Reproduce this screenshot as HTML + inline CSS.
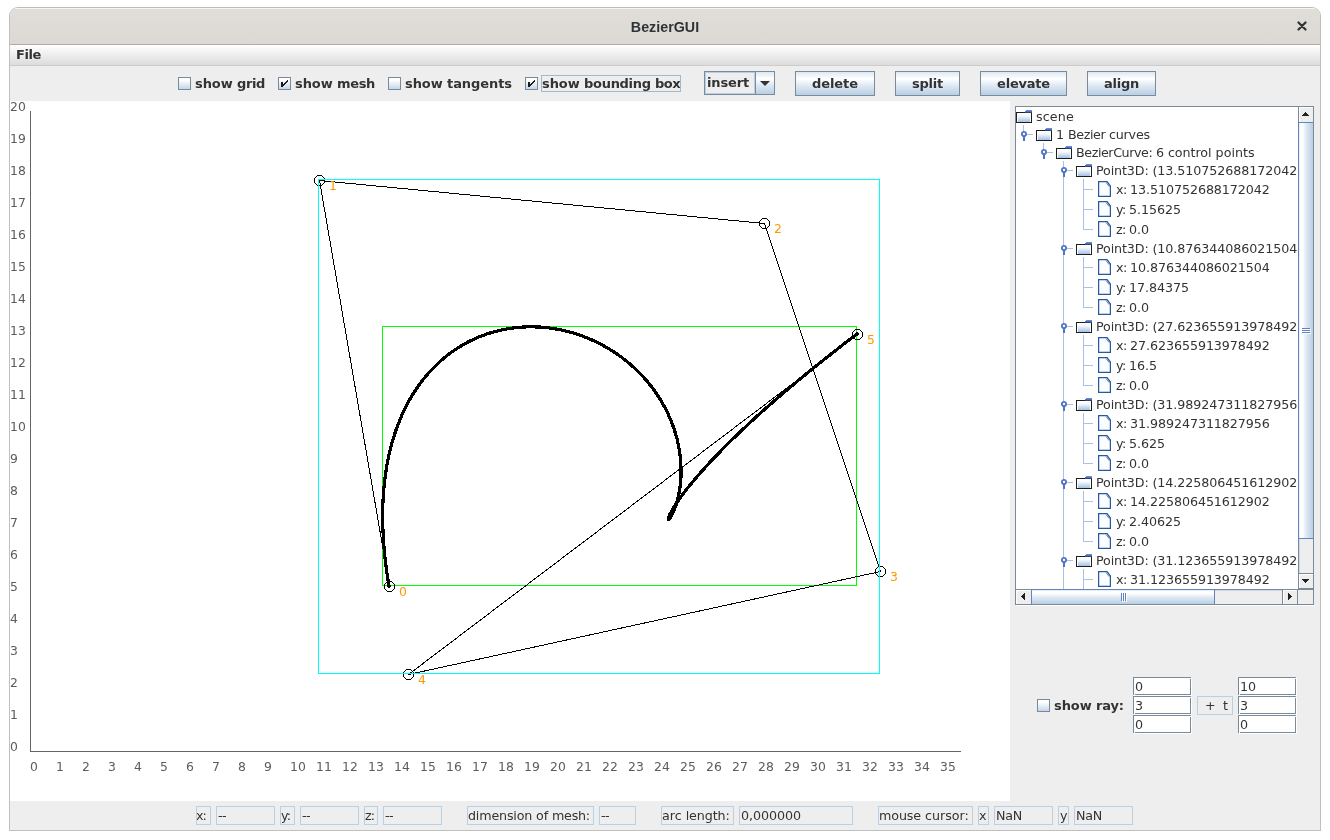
<!DOCTYPE html><html><head><meta charset="utf-8"><title>BezierGUI</title><style>
html,body{margin:0;padding:0;background:#fff;}
body{width:1330px;height:840px;position:relative;overflow:hidden;font-family:"DejaVu Sans","Liberation Sans",sans-serif;font-size:12px;color:#333;}
.abs{position:absolute;}
#win{position:absolute;left:9px;top:7px;width:1312px;height:824px;box-sizing:border-box;border:1px solid #c0c0c0;border-top-color:#bcbcbc;border-radius:9px 9px 0 0;background:#eeeeee;overflow:hidden;}
#title{position:absolute;left:0;top:0;width:1310px;height:37px;background:linear-gradient(#e1deda,#dcd8d4);border-top:1px solid #f6f6f5;box-sizing:border-box;border-bottom:1px solid #b3aba1;}
#title .t{position:absolute;left:0;width:1310px;top:9.2px;text-align:center;font:bold 14px "Liberation Sans",sans-serif;color:#2e3436;transform:scale(1.02,1.1);transform-origin:50% 50%;}
#menubar{position:absolute;left:0;top:37px;width:1310px;height:20px;background:linear-gradient(#ffffff,#dcdcdc);border-bottom:1px solid #cccccc;}
.b{font-weight:bold;font-size:13px;color:#333;white-space:nowrap;}
.cb{position:absolute;width:13px;height:13px;box-sizing:border-box;border:1px solid #7a8a99;background:linear-gradient(#ffffff 0%,#ffffff 20%,#c4d6e8 100%);}
.btn{position:absolute;box-sizing:border-box;border:1px solid #7a8a99;height:25px;background:linear-gradient(#dde8f3 0%,#ffffff 30%,#dde8f3 60%,#b8cfe5 100%);text-align:center;line-height:24px;}
.df{position:absolute;box-sizing:border-box;height:19px;background:#eeeeee;border:1px solid #b8cfe5;font-size:12.7px;line-height:17px;padding-left:2px;white-space:nowrap;overflow:hidden;color:#333;}
#canvas{position:absolute;left:10px;top:101px;width:1000px;height:700px;background:#fff;}
svg text{font-family:"DejaVu Sans",sans-serif;font-size:12.4px;}
.ft{font-size:12.7px;line-height:15px;color:#333;white-space:nowrap}
.tr{position:absolute;white-space:nowrap;font-size:12.7px;line-height:14px;color:#333;}
</style></head><body>
<div id="root" style="position:absolute;left:0;top:0;width:1330px;height:840px;will-change:transform">
<div id="win">
<div id="title"><div class="t">BezierGUI</div>
<svg class="abs" style="left:1287px;top:12px" width="10" height="10" viewBox="0 0 10 10"><path d="M1.5 1.5 L8.5 8.5 M8.5 1.5 L1.5 8.5" stroke="#2e3436" stroke-width="2.2" fill="none" stroke-linecap="round"/></svg>
</div>
<div id="menubar"><div class="abs b" style="left:6px;top:2px"><span style="letter-spacing:-0.40px">File</span></div></div>
</div>
<div class="cb" style="left:178px;top:77px"></div><div class="abs b" style="left:195px;top:76px"><span style="letter-spacing:-0.09px">show </span><span style="letter-spacing:-0.37px">grid</span></div>
<div class="cb" style="left:278px;top:77px"></div><svg class="abs" style="left:278px;top:77px" width="13" height="13" viewBox="0 0 13 13" shape-rendering="crispEdges" fill="#1a1a1a"><rect x="3" y="5" width="2" height="5"/><rect x="9" y="3" width="1" height="2"/><rect x="8" y="4" width="1" height="2"/><rect x="7" y="5" width="1" height="2"/><rect x="6" y="6" width="1" height="2"/><rect x="5" y="7" width="1" height="2"/></svg><div class="abs b" style="left:295px;top:76px"><span style="letter-spacing:-0.09px">show </span><span style="letter-spacing:-0.34px">mesh</span></div>
<div class="cb" style="left:388px;top:77px"></div><div class="abs b" style="left:405px;top:76px"><span style="letter-spacing:-0.09px">show </span><span style="letter-spacing:-0.07px">tangents</span></div>
<div class="cb" style="left:525px;top:77px"></div><svg class="abs" style="left:525px;top:77px" width="13" height="13" viewBox="0 0 13 13" shape-rendering="crispEdges" fill="#1a1a1a"><rect x="3" y="5" width="2" height="5"/><rect x="9" y="3" width="1" height="2"/><rect x="8" y="4" width="1" height="2"/><rect x="7" y="5" width="1" height="2"/><rect x="6" y="6" width="1" height="2"/><rect x="5" y="7" width="1" height="2"/></svg><div class="abs b" style="left:542px;top:76px"><span style="letter-spacing:-0.09px">show </span><span style="letter-spacing:-0.29px">bounding </span><span style="letter-spacing:-0.54px">box</span></div>
<div class="abs" style="left:541px;top:75px;width:140px;height:17px;box-sizing:border-box;border:1px solid #a3b8cc"></div>
<div class="abs" style="left:704px;top:71px;width:71px;height:24px;box-sizing:border-box;border:1px solid #7a8a99;background:#eeeeee"></div>
<div class="abs" style="left:705px;top:72px;width:50px;height:22px;box-sizing:border-box;border:1px solid #b8cfe5;"></div>
<div class="abs b" style="left:707px;top:75px"><span style="letter-spacing:-0.15px">insert</span></div>
<div class="abs" style="left:755px;top:71px;width:20px;height:24px;box-sizing:border-box;border:1px solid #7a8a99;background:linear-gradient(#dde8f3 0%,#ffffff 30%,#dde8f3 60%,#b8cfe5 100%)"></div>
<svg class="abs" style="left:760px;top:81px" width="10" height="6"><path d="M0 0 L10 0 L5 5 Z" fill="#333"/></svg>
<div class="btn b" style="left:795px;top:71px;width:80px"><span style="letter-spacing:-0.07px">delete</span></div>
<div class="btn b" style="left:895px;top:71px;width:65px"><span style="letter-spacing:-0.23px">split</span></div>
<div class="btn b" style="left:980px;top:71px;width:87px"><span style="letter-spacing:-0.20px">elevate</span></div>
<div class="btn b" style="left:1087px;top:71px;width:69px"><span style="letter-spacing:-0.25px">align</span></div>
<div id="canvas"></div>
<svg class="abs" style="left:0;top:0" width="1330" height="840" viewBox="0 0 1330 840" shape-rendering="crispEdges"><path d="M30.5 111 V751.5 H961" stroke="#646464" stroke-width="1" fill="none"/><text x="10" y="751" fill="#5c5c5c" letter-spacing="0.11">0</text><text x="10" y="719" fill="#5c5c5c" letter-spacing="0.11">1</text><text x="10" y="687" fill="#5c5c5c" letter-spacing="0.11">2</text><text x="10" y="655" fill="#5c5c5c" letter-spacing="0.11">3</text><text x="10" y="623" fill="#5c5c5c" letter-spacing="0.11">4</text><text x="10" y="591" fill="#5c5c5c" letter-spacing="0.11">5</text><text x="10" y="559" fill="#5c5c5c" letter-spacing="0.11">6</text><text x="10" y="527" fill="#5c5c5c" letter-spacing="0.11">7</text><text x="10" y="495" fill="#5c5c5c" letter-spacing="0.11">8</text><text x="10" y="463" fill="#5c5c5c" letter-spacing="0.11">9</text><text x="10" y="431" fill="#5c5c5c" letter-spacing="0.11">10</text><text x="10" y="399" fill="#5c5c5c" letter-spacing="0.11">11</text><text x="10" y="367" fill="#5c5c5c" letter-spacing="0.11">12</text><text x="10" y="335" fill="#5c5c5c" letter-spacing="0.11">13</text><text x="10" y="303" fill="#5c5c5c" letter-spacing="0.11">14</text><text x="10" y="271" fill="#5c5c5c" letter-spacing="0.11">15</text><text x="10" y="239" fill="#5c5c5c" letter-spacing="0.11">16</text><text x="10" y="207" fill="#5c5c5c" letter-spacing="0.11">17</text><text x="10" y="175" fill="#5c5c5c" letter-spacing="0.11">18</text><text x="10" y="143" fill="#5c5c5c" letter-spacing="0.11">19</text><text x="10" y="111" fill="#5c5c5c" letter-spacing="0.11">20</text><text x="30" y="771" fill="#5c5c5c" letter-spacing="0.11">0</text><text x="56" y="771" fill="#5c5c5c" letter-spacing="0.11">1</text><text x="82" y="771" fill="#5c5c5c" letter-spacing="0.11">2</text><text x="108" y="771" fill="#5c5c5c" letter-spacing="0.11">3</text><text x="134" y="771" fill="#5c5c5c" letter-spacing="0.11">4</text><text x="160" y="771" fill="#5c5c5c" letter-spacing="0.11">5</text><text x="186" y="771" fill="#5c5c5c" letter-spacing="0.11">6</text><text x="212" y="771" fill="#5c5c5c" letter-spacing="0.11">7</text><text x="238" y="771" fill="#5c5c5c" letter-spacing="0.11">8</text><text x="264" y="771" fill="#5c5c5c" letter-spacing="0.11">9</text><text x="290" y="771" fill="#5c5c5c" letter-spacing="0.11">10</text><text x="316" y="771" fill="#5c5c5c" letter-spacing="0.11">11</text><text x="342" y="771" fill="#5c5c5c" letter-spacing="0.11">12</text><text x="368" y="771" fill="#5c5c5c" letter-spacing="0.11">13</text><text x="394" y="771" fill="#5c5c5c" letter-spacing="0.11">14</text><text x="420" y="771" fill="#5c5c5c" letter-spacing="0.11">15</text><text x="446" y="771" fill="#5c5c5c" letter-spacing="0.11">16</text><text x="472" y="771" fill="#5c5c5c" letter-spacing="0.11">17</text><text x="498" y="771" fill="#5c5c5c" letter-spacing="0.11">18</text><text x="524" y="771" fill="#5c5c5c" letter-spacing="0.11">19</text><text x="550" y="771" fill="#5c5c5c" letter-spacing="0.11">20</text><text x="576" y="771" fill="#5c5c5c" letter-spacing="0.11">21</text><text x="602" y="771" fill="#5c5c5c" letter-spacing="0.11">22</text><text x="628" y="771" fill="#5c5c5c" letter-spacing="0.11">23</text><text x="654" y="771" fill="#5c5c5c" letter-spacing="0.11">24</text><text x="680" y="771" fill="#5c5c5c" letter-spacing="0.11">25</text><text x="706" y="771" fill="#5c5c5c" letter-spacing="0.11">26</text><text x="732" y="771" fill="#5c5c5c" letter-spacing="0.11">27</text><text x="758" y="771" fill="#5c5c5c" letter-spacing="0.11">28</text><text x="784" y="771" fill="#5c5c5c" letter-spacing="0.11">29</text><text x="810" y="771" fill="#5c5c5c" letter-spacing="0.11">30</text><text x="836" y="771" fill="#5c5c5c" letter-spacing="0.11">31</text><text x="862" y="771" fill="#5c5c5c" letter-spacing="0.11">32</text><text x="888" y="771" fill="#5c5c5c" letter-spacing="0.11">33</text><text x="914" y="771" fill="#5c5c5c" letter-spacing="0.11">34</text><text x="940" y="771" fill="#5c5c5c" letter-spacing="0.11">35</text><rect x="382.5" y="326.5" width="474" height="259" stroke="#00ff00" fill="none"/><polyline points="389.5,586.5 319.5,180.5 764.5,223.5 880.5,571.5 408.5,674.5 857.5,334.5" stroke="#000" stroke-width="1" fill="none"/><polyline points="389.0,586.0 387.9,579.3 386.9,572.7 386.0,566.1 385.2,559.7 384.6,553.4 384.0,547.2 383.5,541.1 383.2,535.0 382.9,529.1 382.7,523.3 382.7,517.5 382.7,511.9 382.8,506.3 383.0,500.9 383.3,495.5 383.7,490.3 384.2,485.1 384.8,480.0 385.4,475.0 386.1,470.2 386.9,465.4 387.8,460.7 388.7,456.0 389.8,451.5 390.9,447.1 392.0,442.7 393.3,438.5 394.6,434.3 395.9,430.3 397.4,426.3 398.9,422.4 400.4,418.6 402.0,414.8 403.7,411.2 405.4,407.6 407.2,404.2 409.0,400.8 410.9,397.5 412.9,394.3 414.9,391.1 416.9,388.1 419.0,385.1 421.1,382.2 423.3,379.4 425.5,376.7 427.7,374.0 430.0,371.5 432.3,369.0 434.7,366.6 437.1,364.3 439.5,362.0 441.9,359.8 444.4,357.7 446.9,355.7 449.5,353.7 452.0,351.9 454.6,350.1 457.2,348.3 459.9,346.7 462.5,345.1 465.2,343.6 467.9,342.1 470.6,340.7 473.4,339.4 476.1,338.2 478.9,337.0 481.6,335.9 484.4,334.9 487.2,333.9 490.0,333.0 492.8,332.2 495.6,331.4 498.4,330.7 501.3,330.0 504.1,329.4 506.9,328.9 509.7,328.4 512.6,328.0 515.4,327.7 518.2,327.4 521.1,327.2 523.9,327.0 526.7,326.9 529.5,326.8 532.3,326.8 535.1,326.9 537.9,327.0 540.7,327.1 543.4,327.4 546.2,327.6 548.9,327.9 551.7,328.3 554.4,328.7 557.1,329.2 559.8,329.7 562.4,330.2 565.1,330.9 567.7,331.5 570.3,332.2 572.9,332.9 575.5,333.7 578.1,334.6 580.6,335.4 583.1,336.3 585.6,337.3 588.1,338.3 590.5,339.3 592.9,340.4 595.3,341.5 597.7,342.7 600.0,343.9 602.4,345.1 604.6,346.3 606.9,347.6 609.1,348.9 611.3,350.3 613.5,351.7 615.6,353.1 617.8,354.6 619.8,356.0 621.9,357.5 623.9,359.1 625.9,360.6 627.8,362.2 629.8,363.8 631.6,365.5 633.5,367.2 635.3,368.8 637.1,370.6 638.8,372.3 640.5,374.0 642.2,375.8 643.9,377.6 645.5,379.4 647.1,381.2 648.6,383.1 650.1,385.0 651.6,386.8 653.0,388.7 654.4,390.6 655.7,392.6 657.1,394.5 658.3,396.4 659.6,398.4 660.8,400.4 662.0,402.3 663.1,404.3 664.2,406.3 665.3,408.3 666.3,410.3 667.3,412.3 668.2,414.3 669.1,416.4 670.0,418.4 670.9,420.4 671.7,422.4 672.4,424.4 673.2,426.5 673.9,428.5 674.5,430.5 675.2,432.5 675.8,434.5 676.3,436.5 676.9,438.5 677.4,440.5 677.8,442.5 678.3,444.5 678.7,446.5 679.0,448.4 679.3,450.4 679.6,452.3 679.9,454.3 680.2,456.2 680.4,458.1 680.5,460.0 680.7,461.9 680.8,463.7 680.9,465.6 681.0,467.4 681.0,469.2 681.0,471.0 681.0,472.8 681.0,474.5 680.9,476.3 680.9,478.0 680.8,479.6 680.6,481.3 680.5,482.9 680.3,484.6 680.1,486.1 679.9,487.7 679.7,489.2 679.5,490.7 679.2,492.2 678.9,493.6 678.6,495.1 678.3,496.4 678.0,497.8 677.7,499.1 677.4,500.4 677.0,501.6 676.7,502.8 676.3,504.0 676.0,505.2 675.6,506.3 675.2,507.3 674.8,508.3 674.5,509.3 674.1,510.3 673.7,511.2 673.3,512.0 672.9,512.8 672.6,513.6 672.2,514.3 671.9,515.0 671.5,515.7 671.2,516.3 670.8,516.8 670.5,517.3 670.2,517.7 669.9,518.1 669.7,518.5 669.4,518.8 669.2,519.0 669.0,519.2 668.8,519.3 668.6,519.4 668.5,519.4 668.4,519.4 668.3,519.3 668.2,519.2 668.2,519.0 668.2,518.7 668.3,518.4 668.4,518.0 668.5,517.6 668.7,517.1 668.9,516.5 669.1,515.9 669.4,515.2 669.8,514.5 670.2,513.6 670.7,512.8 671.2,511.8 671.7,510.8 672.4,509.7 673.0,508.6 673.8,507.4 674.6,506.1 675.5,504.7 676.4,503.3 677.4,501.8 678.5,500.2 679.7,498.6 680.9,496.8 682.3,495.0 683.7,493.2 685.1,491.2 686.7,489.2 688.4,487.1 690.1,485.0 692.0,482.7 693.9,480.4 696.0,478.0 698.1,475.5 700.3,472.9 702.7,470.3 705.1,467.6 707.7,464.7 710.4,461.8 713.2,458.9 716.1,455.8 719.1,452.7 722.3,449.4 725.6,446.1 729.0,442.7 732.5,439.2 736.2,435.7 740.0,432.0 744.0,428.3 748.1,424.4 752.3,420.5 756.7,416.5 761.2,412.4 765.9,408.2 770.8,403.9 775.8,399.5 781.0,395.0 786.3,390.5 791.9,385.8 797.5,381.1 803.4,376.2 809.4,371.3 815.7,366.2 822.1,361.1 828.7,355.9 835.5,350.6 842.4,345.1 849.6,339.6 857.0,334.0" stroke="#000" stroke-width="3.2" fill="none" stroke-linejoin="round" stroke-linecap="square"/><path d="M387.5 581.5h4l3 3v4l-3 3h-4l-3 -3v-4z" stroke="#000" fill="none"/><text x="399" y="596" fill="#ff9800">0</text><path d="M317.5 175.5h4l3 3v4l-3 3h-4l-3 -3v-4z" stroke="#000" fill="none"/><text x="329" y="190" fill="#ff9800">1</text><path d="M762.5 218.5h4l3 3v4l-3 3h-4l-3 -3v-4z" stroke="#000" fill="none"/><text x="774" y="233" fill="#ff9800">2</text><path d="M878.5 566.5h4l3 3v4l-3 3h-4l-3 -3v-4z" stroke="#000" fill="none"/><text x="890" y="581" fill="#ff9800">3</text><path d="M406.5 669.5h4l3 3v4l-3 3h-4l-3 -3v-4z" stroke="#000" fill="none"/><text x="418" y="684" fill="#ff9800">4</text><path d="M855.5 329.5h4l3 3v4l-3 3h-4l-3 -3v-4z" stroke="#000" fill="none"/><text x="867" y="344" fill="#ff9800">5</text><rect x="318.5" y="179.5" width="561" height="494" stroke="#00ffff" fill="none"/></svg>
<div class="abs" style="left:1015px;top:106px;width:299px;height:499px;box-sizing:border-box;border:1px solid #7a8a99;background:#fff"></div>
<svg width="0" height="0" style="position:absolute"><defs><linearGradient id="fg" x1="0" y1="0" x2="0" y2="1"><stop offset="0" stop-color="#ffffff"/><stop offset="0.25" stop-color="#f4f8fc"/><stop offset="1" stop-color="#a3c0e6"/></linearGradient></defs></svg>
<div class="abs" style="left:1016px;top:107px;width:282px;height:482px;overflow:hidden;background:#fff"><div class="abs" style="left:7px;top:18px;width:1px;height:10px;background:#a9c1e4"></div><div class="abs" style="left:27px;top:36px;width:1px;height:10px;background:#a9c1e4"></div><div class="abs" style="left:47px;top:54px;width:1px;height:428px;background:#a9c1e4"></div><div class="abs" style="left:67px;top:72px;width:1px;height:51px;background:#a9c1e4"></div><div class="abs" style="left:67px;top:150px;width:1px;height:51px;background:#a9c1e4"></div><div class="abs" style="left:67px;top:228px;width:1px;height:51px;background:#a9c1e4"></div><div class="abs" style="left:67px;top:306px;width:1px;height:51px;background:#a9c1e4"></div><div class="abs" style="left:67px;top:384px;width:1px;height:51px;background:#a9c1e4"></div><div class="abs" style="left:67px;top:462px;width:1px;height:51px;background:#a9c1e4"></div><svg class="abs" style="left:0px;top:3px" width="16" height="13" viewBox="0 0 16 13" shape-rendering="crispEdges"><rect x="10" y="0" width="6" height="1" fill="#6a8ad0"/><rect x="9" y="1" width="7" height="1" fill="#4f72c0"/><rect x="0" y="2" width="16" height="11" fill="#1e1e1e"/><rect x="1" y="3" width="14" height="9" fill="#ffffff"/><rect x="2" y="4" width="12" height="8" fill="url(#fg)"/><rect x="9" y="2" width="7" height="1" fill="#33466e"/></svg><div class="tr" style="left:20px;top:3px"><span style="letter-spacing:0.14px">scene</span></div><svg class="abs" style="left:20px;top:21px" width="16" height="13" viewBox="0 0 16 13" shape-rendering="crispEdges"><rect x="10" y="0" width="6" height="1" fill="#6a8ad0"/><rect x="9" y="1" width="7" height="1" fill="#4f72c0"/><rect x="0" y="2" width="16" height="11" fill="#1e1e1e"/><rect x="1" y="3" width="14" height="9" fill="#ffffff"/><rect x="2" y="4" width="12" height="8" fill="url(#fg)"/><rect x="9" y="2" width="7" height="1" fill="#33466e"/></svg><div class="tr" style="left:40px;top:21px"><span style="letter-spacing:-0.06px">1 </span><span style="letter-spacing:-0.40px">Bezier </span><span style="letter-spacing:-0.20px">curves</span></div><div class="abs" style="left:11px;top:27px;width:6px;height:1px;background:#a9c1e4"></div><svg class="abs" style="left:4px;top:23px" width="8" height="11" viewBox="0 0 8 11"><circle cx="4" cy="4" r="2.1" fill="#fff" stroke="#5476c0" stroke-width="1.9"/><rect x="3" y="6.5" width="2" height="4.5" fill="#5476c0"/></svg><svg class="abs" style="left:40px;top:39px" width="16" height="13" viewBox="0 0 16 13" shape-rendering="crispEdges"><rect x="10" y="0" width="6" height="1" fill="#6a8ad0"/><rect x="9" y="1" width="7" height="1" fill="#4f72c0"/><rect x="0" y="2" width="16" height="11" fill="#1e1e1e"/><rect x="1" y="3" width="14" height="9" fill="#ffffff"/><rect x="2" y="4" width="12" height="8" fill="url(#fg)"/><rect x="9" y="2" width="7" height="1" fill="#33466e"/></svg><div class="tr" style="left:60px;top:39px"><span style="letter-spacing:-0.43px">BezierCurve: </span><span style="letter-spacing:-0.06px">6 </span><span style="letter-spacing:-0.04px">control </span><span style="letter-spacing:-0.00px">points</span></div><div class="abs" style="left:31px;top:45px;width:6px;height:1px;background:#a9c1e4"></div><svg class="abs" style="left:24px;top:41px" width="8" height="11" viewBox="0 0 8 11"><circle cx="4" cy="4" r="2.1" fill="#fff" stroke="#5476c0" stroke-width="1.9"/><rect x="3" y="6.5" width="2" height="4.5" fill="#5476c0"/></svg><svg class="abs" style="left:60px;top:57px" width="16" height="13" viewBox="0 0 16 13" shape-rendering="crispEdges"><rect x="10" y="0" width="6" height="1" fill="#6a8ad0"/><rect x="9" y="1" width="7" height="1" fill="#4f72c0"/><rect x="0" y="2" width="16" height="11" fill="#1e1e1e"/><rect x="1" y="3" width="14" height="9" fill="#ffffff"/><rect x="2" y="4" width="12" height="8" fill="url(#fg)"/><rect x="9" y="2" width="7" height="1" fill="#33466e"/></svg><div class="tr" style="left:80px;top:57px"><span style="letter-spacing:-0.13px">Point3D: </span><span style="letter-spacing:-0.07px">(13.510752688172042, </span><span style="letter-spacing:-0.07px">5.15625, </span><span style="letter-spacing:-0.04px">0.0)</span></div><div class="abs" style="left:51px;top:63px;width:6px;height:1px;background:#a9c1e4"></div><svg class="abs" style="left:44px;top:59px" width="8" height="11" viewBox="0 0 8 11"><circle cx="4" cy="4" r="2.1" fill="#fff" stroke="#5476c0" stroke-width="1.9"/><rect x="3" y="6.5" width="2" height="4.5" fill="#5476c0"/></svg><svg class="abs" style="left:82px;top:74px" width="13" height="16" viewBox="0 0 13 16"><path d="M0.6 0.5 H9 L12.4 5 V15.4 H0.6 Z" fill="#fbfdff" stroke="#2a589c" stroke-width="1.25"/><path d="M8 1.6 L11.4 5.8" fill="none" stroke="#2a589c" stroke-width="0.9" opacity="0.75"/></svg><div class="tr" style="left:100px;top:76px"><span style="letter-spacing:-0.61px">x: </span><span style="letter-spacing:-0.08px">13.510752688172042</span></div><div class="abs" style="left:67px;top:82px;width:10px;height:1px;background:#a9c1e4"></div><svg class="abs" style="left:82px;top:94px" width="13" height="16" viewBox="0 0 13 16"><path d="M0.6 0.5 H9 L12.4 5 V15.4 H0.6 Z" fill="#fbfdff" stroke="#2a589c" stroke-width="1.25"/><path d="M8 1.6 L11.4 5.8" fill="none" stroke="#2a589c" stroke-width="0.9" opacity="0.75"/></svg><div class="tr" style="left:100px;top:96px"><span style="letter-spacing:-0.61px">y: </span><span style="letter-spacing:-0.07px">5.15625</span></div><div class="abs" style="left:67px;top:102px;width:10px;height:1px;background:#a9c1e4"></div><svg class="abs" style="left:82px;top:114px" width="13" height="16" viewBox="0 0 13 16"><path d="M0.6 0.5 H9 L12.4 5 V15.4 H0.6 Z" fill="#fbfdff" stroke="#2a589c" stroke-width="1.25"/><path d="M8 1.6 L11.4 5.8" fill="none" stroke="#2a589c" stroke-width="0.9" opacity="0.75"/></svg><div class="tr" style="left:100px;top:116px"><span style="letter-spacing:-0.66px">z: </span><span style="letter-spacing:-0.07px">0.0</span></div><div class="abs" style="left:67px;top:122px;width:10px;height:1px;background:#a9c1e4"></div><svg class="abs" style="left:60px;top:135px" width="16" height="13" viewBox="0 0 16 13" shape-rendering="crispEdges"><rect x="10" y="0" width="6" height="1" fill="#6a8ad0"/><rect x="9" y="1" width="7" height="1" fill="#4f72c0"/><rect x="0" y="2" width="16" height="11" fill="#1e1e1e"/><rect x="1" y="3" width="14" height="9" fill="#ffffff"/><rect x="2" y="4" width="12" height="8" fill="url(#fg)"/><rect x="9" y="2" width="7" height="1" fill="#33466e"/></svg><div class="tr" style="left:80px;top:135px"><span style="letter-spacing:-0.13px">Point3D: </span><span style="letter-spacing:-0.07px">(10.876344086021504, </span><span style="letter-spacing:-0.07px">17.84375, </span><span style="letter-spacing:-0.04px">0.0)</span></div><div class="abs" style="left:51px;top:141px;width:6px;height:1px;background:#a9c1e4"></div><svg class="abs" style="left:44px;top:137px" width="8" height="11" viewBox="0 0 8 11"><circle cx="4" cy="4" r="2.1" fill="#fff" stroke="#5476c0" stroke-width="1.9"/><rect x="3" y="6.5" width="2" height="4.5" fill="#5476c0"/></svg><svg class="abs" style="left:82px;top:152px" width="13" height="16" viewBox="0 0 13 16"><path d="M0.6 0.5 H9 L12.4 5 V15.4 H0.6 Z" fill="#fbfdff" stroke="#2a589c" stroke-width="1.25"/><path d="M8 1.6 L11.4 5.8" fill="none" stroke="#2a589c" stroke-width="0.9" opacity="0.75"/></svg><div class="tr" style="left:100px;top:154px"><span style="letter-spacing:-0.61px">x: </span><span style="letter-spacing:-0.08px">10.876344086021504</span></div><div class="abs" style="left:67px;top:160px;width:10px;height:1px;background:#a9c1e4"></div><svg class="abs" style="left:82px;top:172px" width="13" height="16" viewBox="0 0 13 16"><path d="M0.6 0.5 H9 L12.4 5 V15.4 H0.6 Z" fill="#fbfdff" stroke="#2a589c" stroke-width="1.25"/><path d="M8 1.6 L11.4 5.8" fill="none" stroke="#2a589c" stroke-width="0.9" opacity="0.75"/></svg><div class="tr" style="left:100px;top:174px"><span style="letter-spacing:-0.61px">y: </span><span style="letter-spacing:-0.07px">17.84375</span></div><div class="abs" style="left:67px;top:180px;width:10px;height:1px;background:#a9c1e4"></div><svg class="abs" style="left:82px;top:192px" width="13" height="16" viewBox="0 0 13 16"><path d="M0.6 0.5 H9 L12.4 5 V15.4 H0.6 Z" fill="#fbfdff" stroke="#2a589c" stroke-width="1.25"/><path d="M8 1.6 L11.4 5.8" fill="none" stroke="#2a589c" stroke-width="0.9" opacity="0.75"/></svg><div class="tr" style="left:100px;top:194px"><span style="letter-spacing:-0.66px">z: </span><span style="letter-spacing:-0.07px">0.0</span></div><div class="abs" style="left:67px;top:200px;width:10px;height:1px;background:#a9c1e4"></div><svg class="abs" style="left:60px;top:213px" width="16" height="13" viewBox="0 0 16 13" shape-rendering="crispEdges"><rect x="10" y="0" width="6" height="1" fill="#6a8ad0"/><rect x="9" y="1" width="7" height="1" fill="#4f72c0"/><rect x="0" y="2" width="16" height="11" fill="#1e1e1e"/><rect x="1" y="3" width="14" height="9" fill="#ffffff"/><rect x="2" y="4" width="12" height="8" fill="url(#fg)"/><rect x="9" y="2" width="7" height="1" fill="#33466e"/></svg><div class="tr" style="left:80px;top:213px"><span style="letter-spacing:-0.13px">Point3D: </span><span style="letter-spacing:-0.07px">(27.623655913978492, </span><span style="letter-spacing:-0.06px">16.5, </span><span style="letter-spacing:-0.04px">0.0)</span></div><div class="abs" style="left:51px;top:219px;width:6px;height:1px;background:#a9c1e4"></div><svg class="abs" style="left:44px;top:215px" width="8" height="11" viewBox="0 0 8 11"><circle cx="4" cy="4" r="2.1" fill="#fff" stroke="#5476c0" stroke-width="1.9"/><rect x="3" y="6.5" width="2" height="4.5" fill="#5476c0"/></svg><svg class="abs" style="left:82px;top:230px" width="13" height="16" viewBox="0 0 13 16"><path d="M0.6 0.5 H9 L12.4 5 V15.4 H0.6 Z" fill="#fbfdff" stroke="#2a589c" stroke-width="1.25"/><path d="M8 1.6 L11.4 5.8" fill="none" stroke="#2a589c" stroke-width="0.9" opacity="0.75"/></svg><div class="tr" style="left:100px;top:232px"><span style="letter-spacing:-0.61px">x: </span><span style="letter-spacing:-0.08px">27.623655913978492</span></div><div class="abs" style="left:67px;top:238px;width:10px;height:1px;background:#a9c1e4"></div><svg class="abs" style="left:82px;top:250px" width="13" height="16" viewBox="0 0 13 16"><path d="M0.6 0.5 H9 L12.4 5 V15.4 H0.6 Z" fill="#fbfdff" stroke="#2a589c" stroke-width="1.25"/><path d="M8 1.6 L11.4 5.8" fill="none" stroke="#2a589c" stroke-width="0.9" opacity="0.75"/></svg><div class="tr" style="left:100px;top:252px"><span style="letter-spacing:-0.61px">y: </span><span style="letter-spacing:-0.07px">16.5</span></div><div class="abs" style="left:67px;top:258px;width:10px;height:1px;background:#a9c1e4"></div><svg class="abs" style="left:82px;top:270px" width="13" height="16" viewBox="0 0 13 16"><path d="M0.6 0.5 H9 L12.4 5 V15.4 H0.6 Z" fill="#fbfdff" stroke="#2a589c" stroke-width="1.25"/><path d="M8 1.6 L11.4 5.8" fill="none" stroke="#2a589c" stroke-width="0.9" opacity="0.75"/></svg><div class="tr" style="left:100px;top:272px"><span style="letter-spacing:-0.66px">z: </span><span style="letter-spacing:-0.07px">0.0</span></div><div class="abs" style="left:67px;top:278px;width:10px;height:1px;background:#a9c1e4"></div><svg class="abs" style="left:60px;top:291px" width="16" height="13" viewBox="0 0 16 13" shape-rendering="crispEdges"><rect x="10" y="0" width="6" height="1" fill="#6a8ad0"/><rect x="9" y="1" width="7" height="1" fill="#4f72c0"/><rect x="0" y="2" width="16" height="11" fill="#1e1e1e"/><rect x="1" y="3" width="14" height="9" fill="#ffffff"/><rect x="2" y="4" width="12" height="8" fill="url(#fg)"/><rect x="9" y="2" width="7" height="1" fill="#33466e"/></svg><div class="tr" style="left:80px;top:291px"><span style="letter-spacing:-0.13px">Point3D: </span><span style="letter-spacing:-0.07px">(31.989247311827956, </span><span style="letter-spacing:-0.06px">5.625, </span><span style="letter-spacing:-0.04px">0.0)</span></div><div class="abs" style="left:51px;top:297px;width:6px;height:1px;background:#a9c1e4"></div><svg class="abs" style="left:44px;top:293px" width="8" height="11" viewBox="0 0 8 11"><circle cx="4" cy="4" r="2.1" fill="#fff" stroke="#5476c0" stroke-width="1.9"/><rect x="3" y="6.5" width="2" height="4.5" fill="#5476c0"/></svg><svg class="abs" style="left:82px;top:308px" width="13" height="16" viewBox="0 0 13 16"><path d="M0.6 0.5 H9 L12.4 5 V15.4 H0.6 Z" fill="#fbfdff" stroke="#2a589c" stroke-width="1.25"/><path d="M8 1.6 L11.4 5.8" fill="none" stroke="#2a589c" stroke-width="0.9" opacity="0.75"/></svg><div class="tr" style="left:100px;top:310px"><span style="letter-spacing:-0.61px">x: </span><span style="letter-spacing:-0.08px">31.989247311827956</span></div><div class="abs" style="left:67px;top:316px;width:10px;height:1px;background:#a9c1e4"></div><svg class="abs" style="left:82px;top:328px" width="13" height="16" viewBox="0 0 13 16"><path d="M0.6 0.5 H9 L12.4 5 V15.4 H0.6 Z" fill="#fbfdff" stroke="#2a589c" stroke-width="1.25"/><path d="M8 1.6 L11.4 5.8" fill="none" stroke="#2a589c" stroke-width="0.9" opacity="0.75"/></svg><div class="tr" style="left:100px;top:330px"><span style="letter-spacing:-0.61px">y: </span><span style="letter-spacing:-0.07px">5.625</span></div><div class="abs" style="left:67px;top:336px;width:10px;height:1px;background:#a9c1e4"></div><svg class="abs" style="left:82px;top:348px" width="13" height="16" viewBox="0 0 13 16"><path d="M0.6 0.5 H9 L12.4 5 V15.4 H0.6 Z" fill="#fbfdff" stroke="#2a589c" stroke-width="1.25"/><path d="M8 1.6 L11.4 5.8" fill="none" stroke="#2a589c" stroke-width="0.9" opacity="0.75"/></svg><div class="tr" style="left:100px;top:350px"><span style="letter-spacing:-0.66px">z: </span><span style="letter-spacing:-0.07px">0.0</span></div><div class="abs" style="left:67px;top:356px;width:10px;height:1px;background:#a9c1e4"></div><svg class="abs" style="left:60px;top:369px" width="16" height="13" viewBox="0 0 16 13" shape-rendering="crispEdges"><rect x="10" y="0" width="6" height="1" fill="#6a8ad0"/><rect x="9" y="1" width="7" height="1" fill="#4f72c0"/><rect x="0" y="2" width="16" height="11" fill="#1e1e1e"/><rect x="1" y="3" width="14" height="9" fill="#ffffff"/><rect x="2" y="4" width="12" height="8" fill="url(#fg)"/><rect x="9" y="2" width="7" height="1" fill="#33466e"/></svg><div class="tr" style="left:80px;top:369px"><span style="letter-spacing:-0.13px">Point3D: </span><span style="letter-spacing:-0.07px">(14.225806451612902, </span><span style="letter-spacing:-0.07px">2.40625, </span><span style="letter-spacing:-0.04px">0.0)</span></div><div class="abs" style="left:51px;top:375px;width:6px;height:1px;background:#a9c1e4"></div><svg class="abs" style="left:44px;top:371px" width="8" height="11" viewBox="0 0 8 11"><circle cx="4" cy="4" r="2.1" fill="#fff" stroke="#5476c0" stroke-width="1.9"/><rect x="3" y="6.5" width="2" height="4.5" fill="#5476c0"/></svg><svg class="abs" style="left:82px;top:386px" width="13" height="16" viewBox="0 0 13 16"><path d="M0.6 0.5 H9 L12.4 5 V15.4 H0.6 Z" fill="#fbfdff" stroke="#2a589c" stroke-width="1.25"/><path d="M8 1.6 L11.4 5.8" fill="none" stroke="#2a589c" stroke-width="0.9" opacity="0.75"/></svg><div class="tr" style="left:100px;top:388px"><span style="letter-spacing:-0.61px">x: </span><span style="letter-spacing:-0.08px">14.225806451612902</span></div><div class="abs" style="left:67px;top:394px;width:10px;height:1px;background:#a9c1e4"></div><svg class="abs" style="left:82px;top:406px" width="13" height="16" viewBox="0 0 13 16"><path d="M0.6 0.5 H9 L12.4 5 V15.4 H0.6 Z" fill="#fbfdff" stroke="#2a589c" stroke-width="1.25"/><path d="M8 1.6 L11.4 5.8" fill="none" stroke="#2a589c" stroke-width="0.9" opacity="0.75"/></svg><div class="tr" style="left:100px;top:408px"><span style="letter-spacing:-0.61px">y: </span><span style="letter-spacing:-0.07px">2.40625</span></div><div class="abs" style="left:67px;top:414px;width:10px;height:1px;background:#a9c1e4"></div><svg class="abs" style="left:82px;top:426px" width="13" height="16" viewBox="0 0 13 16"><path d="M0.6 0.5 H9 L12.4 5 V15.4 H0.6 Z" fill="#fbfdff" stroke="#2a589c" stroke-width="1.25"/><path d="M8 1.6 L11.4 5.8" fill="none" stroke="#2a589c" stroke-width="0.9" opacity="0.75"/></svg><div class="tr" style="left:100px;top:428px"><span style="letter-spacing:-0.66px">z: </span><span style="letter-spacing:-0.07px">0.0</span></div><div class="abs" style="left:67px;top:434px;width:10px;height:1px;background:#a9c1e4"></div><svg class="abs" style="left:60px;top:447px" width="16" height="13" viewBox="0 0 16 13" shape-rendering="crispEdges"><rect x="10" y="0" width="6" height="1" fill="#6a8ad0"/><rect x="9" y="1" width="7" height="1" fill="#4f72c0"/><rect x="0" y="2" width="16" height="11" fill="#1e1e1e"/><rect x="1" y="3" width="14" height="9" fill="#ffffff"/><rect x="2" y="4" width="12" height="8" fill="url(#fg)"/><rect x="9" y="2" width="7" height="1" fill="#33466e"/></svg><div class="tr" style="left:80px;top:447px"><span style="letter-spacing:-0.13px">Point3D: </span><span style="letter-spacing:-0.07px">(31.123655913978492, </span><span style="letter-spacing:-0.07px">13.03125, </span><span style="letter-spacing:-0.04px">0.0)</span></div><div class="abs" style="left:51px;top:453px;width:6px;height:1px;background:#a9c1e4"></div><svg class="abs" style="left:44px;top:449px" width="8" height="11" viewBox="0 0 8 11"><circle cx="4" cy="4" r="2.1" fill="#fff" stroke="#5476c0" stroke-width="1.9"/><rect x="3" y="6.5" width="2" height="4.5" fill="#5476c0"/></svg><svg class="abs" style="left:82px;top:464px" width="13" height="16" viewBox="0 0 13 16"><path d="M0.6 0.5 H9 L12.4 5 V15.4 H0.6 Z" fill="#fbfdff" stroke="#2a589c" stroke-width="1.25"/><path d="M8 1.6 L11.4 5.8" fill="none" stroke="#2a589c" stroke-width="0.9" opacity="0.75"/></svg><div class="tr" style="left:100px;top:466px"><span style="letter-spacing:-0.61px">x: </span><span style="letter-spacing:-0.08px">31.123655913978492</span></div><div class="abs" style="left:67px;top:472px;width:10px;height:1px;background:#a9c1e4"></div><svg class="abs" style="left:82px;top:484px" width="13" height="16" viewBox="0 0 13 16"><path d="M0.6 0.5 H9 L12.4 5 V15.4 H0.6 Z" fill="#fbfdff" stroke="#2a589c" stroke-width="1.25"/><path d="M8 1.6 L11.4 5.8" fill="none" stroke="#2a589c" stroke-width="0.9" opacity="0.75"/></svg><div class="tr" style="left:100px;top:486px"><span style="letter-spacing:-0.61px">y: </span><span style="letter-spacing:-0.07px">13.03125</span></div><div class="abs" style="left:67px;top:492px;width:10px;height:1px;background:#a9c1e4"></div><svg class="abs" style="left:82px;top:504px" width="13" height="16" viewBox="0 0 13 16"><path d="M0.6 0.5 H9 L12.4 5 V15.4 H0.6 Z" fill="#fbfdff" stroke="#2a589c" stroke-width="1.25"/><path d="M8 1.6 L11.4 5.8" fill="none" stroke="#2a589c" stroke-width="0.9" opacity="0.75"/></svg><div class="tr" style="left:100px;top:506px"><span style="letter-spacing:-0.66px">z: </span><span style="letter-spacing:-0.07px">0.0</span></div><div class="abs" style="left:67px;top:512px;width:10px;height:1px;background:#a9c1e4"></div></div>
<div class="abs" style="left:1298px;top:107px;width:15px;height:482px;background:#eeeeee;"></div><div class="abs" style="left:1298px;top:107px;width:1px;height:482px;background:#7a8a99;"></div><div class="abs" style="left:1299px;top:539px;width:1px;height:34px;background:#c9d9ea;"></div><div class="abs" style="left:1299px;top:107px;width:14px;height:1px;background:#ffffff;"></div><div class="abs" style="left:1299px;top:107px;width:1px;height:15px;background:#ffffff;"></div><div class="abs" style="left:1305px;top:112px;width:1px;height:1px;background:#222;"></div><div class="abs" style="left:1304px;top:113px;width:3px;height:1px;background:#222;"></div><div class="abs" style="left:1303px;top:114px;width:5px;height:1px;background:#222;"></div><div class="abs" style="left:1302px;top:115px;width:7px;height:1px;background:#222;"></div><div class="abs" style="left:1298px;top:122px;width:15px;height:417px;background:linear-gradient(to right,#ffffff 0%,#ffffff 25%,#dce7f3 55%,#b8cfe5 100%);box-sizing:border-box;border:1px solid #6382bf;border-right:none"></div><div class="abs" style="left:1299px;top:123px;width:1px;height:415px;background:#e6eef7;"></div><div class="abs" style="left:1302px;top:328px;width:8px;height:1px;background:#6382bf;"></div><div class="abs" style="left:1303px;top:329px;width:8px;height:1px;background:#ffffff;"></div><div class="abs" style="left:1302px;top:330px;width:8px;height:1px;background:#6382bf;"></div><div class="abs" style="left:1303px;top:331px;width:8px;height:1px;background:#ffffff;"></div><div class="abs" style="left:1302px;top:332px;width:8px;height:1px;background:#6382bf;"></div><div class="abs" style="left:1303px;top:333px;width:8px;height:1px;background:#ffffff;"></div><div class="abs" style="left:1298px;top:573px;width:15px;height:1px;background:#7a8a99;"></div><div class="abs" style="left:1299px;top:574px;width:14px;height:1px;background:#ffffff;"></div><div class="abs" style="left:1299px;top:574px;width:1px;height:14px;background:#ffffff;"></div><div class="abs" style="left:1298px;top:588px;width:15px;height:1px;background:#7a8a99;"></div><div class="abs" style="left:1302px;top:579px;width:7px;height:1px;background:#222;"></div><div class="abs" style="left:1303px;top:580px;width:5px;height:1px;background:#222;"></div><div class="abs" style="left:1304px;top:581px;width:3px;height:1px;background:#222;"></div><div class="abs" style="left:1305px;top:582px;width:1px;height:1px;background:#222;"></div><div class="abs" style="left:1016px;top:589px;width:297px;height:15px;background:#eeeeee;"></div><div class="abs" style="left:1016px;top:589px;width:297px;height:1px;background:#7a8a99;"></div><div class="abs" style="left:1016px;top:590px;width:15px;height:1px;background:#ffffff;"></div><div class="abs" style="left:1016px;top:590px;width:1px;height:14px;background:#ffffff;"></div><div class="abs" style="left:1021px;top:596px;width:1px;height:1px;background:#222;"></div><div class="abs" style="left:1022px;top:595px;width:1px;height:3px;background:#222;"></div><div class="abs" style="left:1023px;top:594px;width:1px;height:5px;background:#222;"></div><div class="abs" style="left:1024px;top:593px;width:1px;height:7px;background:#222;"></div><div class="abs" style="left:1031px;top:589px;width:184px;height:15px;background:linear-gradient(#ffffff 0%,#ffffff 25%,#dce7f3 55%,#b8cfe5 100%);box-sizing:border-box;border:1px solid #6382bf;border-bottom:none"></div><div class="abs" style="left:1032px;top:590px;width:182px;height:1px;background:#e6eef7;"></div><div class="abs" style="left:1121px;top:593px;width:1px;height:8px;background:#6382bf;"></div><div class="abs" style="left:1122px;top:594px;width:1px;height:8px;background:#ffffff;"></div><div class="abs" style="left:1123px;top:593px;width:1px;height:8px;background:#6382bf;"></div><div class="abs" style="left:1124px;top:594px;width:1px;height:8px;background:#ffffff;"></div><div class="abs" style="left:1125px;top:593px;width:1px;height:8px;background:#6382bf;"></div><div class="abs" style="left:1126px;top:594px;width:1px;height:8px;background:#ffffff;"></div><div class="abs" style="left:1215px;top:590px;width:67px;height:1px;background:#c9d9ea;"></div><div class="abs" style="left:1282px;top:589px;width:1px;height:15px;background:#7a8a99;"></div><div class="abs" style="left:1283px;top:590px;width:14px;height:1px;background:#ffffff;"></div><div class="abs" style="left:1283px;top:590px;width:1px;height:14px;background:#ffffff;"></div><div class="abs" style="left:1297px;top:589px;width:1px;height:15px;background:#7a8a99;"></div><div class="abs" style="left:1288px;top:593px;width:1px;height:7px;background:#222;"></div><div class="abs" style="left:1289px;top:594px;width:1px;height:5px;background:#222;"></div><div class="abs" style="left:1290px;top:595px;width:1px;height:3px;background:#222;"></div><div class="abs" style="left:1291px;top:596px;width:1px;height:1px;background:#222;"></div><div class="abs" style="left:1016px;top:605px;width:299px;height:1px;background:#ffffff;"></div>
<div class="cb" style="left:1037px;top:699px"></div><div class="abs b" style="left:1054px;top:698px"><span style="letter-spacing:-0.09px">show </span><span style="letter-spacing:-0.21px">ray:</span></div>
<div class="abs" style="left:1133px;top:677px;width:59px;height:19px"><div class="abs" style="left:0;top:0;width:58px;height:18px;box-sizing:border-box;border:1px solid #7a8a99;background:#fff"></div><div class="abs" style="left:1px;top:1px;width:58px;height:18px;box-sizing:border-box;border:1px solid #fff"></div><div class="abs ft" style="left:2px;top:2px"><span style="letter-spacing:-0.08px">0</span></div></div>
<div class="abs" style="left:1238px;top:677px;width:59px;height:19px"><div class="abs" style="left:0;top:0;width:58px;height:18px;box-sizing:border-box;border:1px solid #7a8a99;background:#fff"></div><div class="abs" style="left:1px;top:1px;width:58px;height:18px;box-sizing:border-box;border:1px solid #fff"></div><div class="abs ft" style="left:2px;top:2px"><span style="letter-spacing:-0.08px">10</span></div></div>
<div class="abs" style="left:1133px;top:696px;width:59px;height:19px"><div class="abs" style="left:0;top:0;width:58px;height:18px;box-sizing:border-box;border:1px solid #7a8a99;background:#fff"></div><div class="abs" style="left:1px;top:1px;width:58px;height:18px;box-sizing:border-box;border:1px solid #fff"></div><div class="abs ft" style="left:2px;top:2px"><span style="letter-spacing:-0.08px">3</span></div></div>
<div class="abs" style="left:1238px;top:696px;width:59px;height:19px"><div class="abs" style="left:0;top:0;width:58px;height:18px;box-sizing:border-box;border:1px solid #7a8a99;background:#fff"></div><div class="abs" style="left:1px;top:1px;width:58px;height:18px;box-sizing:border-box;border:1px solid #fff"></div><div class="abs ft" style="left:2px;top:2px"><span style="letter-spacing:-0.08px">3</span></div></div>
<div class="abs" style="left:1133px;top:715px;width:59px;height:19px"><div class="abs" style="left:0;top:0;width:58px;height:18px;box-sizing:border-box;border:1px solid #7a8a99;background:#fff"></div><div class="abs" style="left:1px;top:1px;width:58px;height:18px;box-sizing:border-box;border:1px solid #fff"></div><div class="abs ft" style="left:2px;top:2px"><span style="letter-spacing:-0.08px">0</span></div></div>
<div class="abs" style="left:1238px;top:715px;width:59px;height:19px"><div class="abs" style="left:0;top:0;width:58px;height:18px;box-sizing:border-box;border:1px solid #7a8a99;background:#fff"></div><div class="abs" style="left:1px;top:1px;width:58px;height:18px;box-sizing:border-box;border:1px solid #fff"></div><div class="abs ft" style="left:2px;top:2px"><span style="letter-spacing:-0.08px">0</span></div></div>
<div class="df" style="left:1197px;top:696px;width:36px;white-space:pre;padding-left:3px"><span style="letter-spacing:-0.04px"> </span><span style="letter-spacing:-0.24px">+  </span><span style="letter-spacing:0.02px">t</span></div>
<div class="df" style="left:196px;top:806px;width:15px;padding-left:0"><div class="abs ft" style="left:-1px;top:1px"><span style="letter-spacing:-0.90px">x:</span></div></div>
<div class="df" style="left:216px;top:806px;width:59px;padding-left:0"><div class="abs ft" style="left:1px;top:1px"><span style="letter-spacing:-0.58px">--</span></div></div>
<div class="df" style="left:280px;top:806px;width:15px;padding-left:0"><div class="abs ft" style="left:0px;top:1px"><span style="letter-spacing:-0.90px">y:</span></div></div>
<div class="df" style="left:300px;top:806px;width:59px;padding-left:0"><div class="abs ft" style="left:1px;top:1px"><span style="letter-spacing:-0.58px">--</span></div></div>
<div class="df" style="left:364px;top:806px;width:14px;padding-left:0"><div class="abs ft" style="left:0px;top:1px"><span style="letter-spacing:-0.97px">z:</span></div></div>
<div class="df" style="left:383px;top:806px;width:59px;padding-left:0"><div class="abs ft" style="left:1px;top:1px"><span style="letter-spacing:-0.58px">--</span></div></div>
<div class="df" style="left:467px;top:806px;width:127px;padding-left:0"><div class="abs ft" style="left:0px;top:1px"><span style="letter-spacing:-0.18px">dimension </span><span style="letter-spacing:-0.09px">of </span><span style="letter-spacing:-0.23px">mesh:</span></div></div>
<div class="df" style="left:599px;top:806px;width:37px;padding-left:0"><div class="abs ft" style="left:1px;top:1px"><span style="letter-spacing:-0.58px">--</span></div></div>
<div class="df" style="left:661px;top:806px;width:73px;padding-left:0"><div class="abs ft" style="left:0px;top:1px"><span style="letter-spacing:-0.01px">arc </span><span style="letter-spacing:-0.11px">length:</span></div></div>
<div class="df" style="left:739px;top:806px;width:114px;padding-left:0"><div class="abs ft" style="left:1px;top:1px"><span style="letter-spacing:-0.07px">0,000000</span></div></div>
<div class="df" style="left:878px;top:806px;width:95px;padding-left:0"><div class="abs ft" style="left:0px;top:1px"><span style="letter-spacing:-0.11px">mouse </span><span style="letter-spacing:-0.02px">cursor:</span></div></div>
<div class="df" style="left:978px;top:806px;width:11px;padding-left:0"><div class="abs ft" style="left:0px;top:1px"><span style="letter-spacing:-1.52px">x</span></div></div>
<div class="df" style="left:994px;top:806px;width:59px;padding-left:0"><div class="abs ft" style="left:1px;top:1px"><span style="letter-spacing:-0.26px">NaN</span></div></div>
<div class="df" style="left:1058px;top:806px;width:11px;padding-left:0"><div class="abs ft" style="left:1px;top:1px"><span style="letter-spacing:-1.52px">y</span></div></div>
<div class="df" style="left:1074px;top:806px;width:59px;padding-left:0"><div class="abs ft" style="left:1px;top:1px"><span style="letter-spacing:-0.26px">NaN</span></div></div>
</div></body></html>
